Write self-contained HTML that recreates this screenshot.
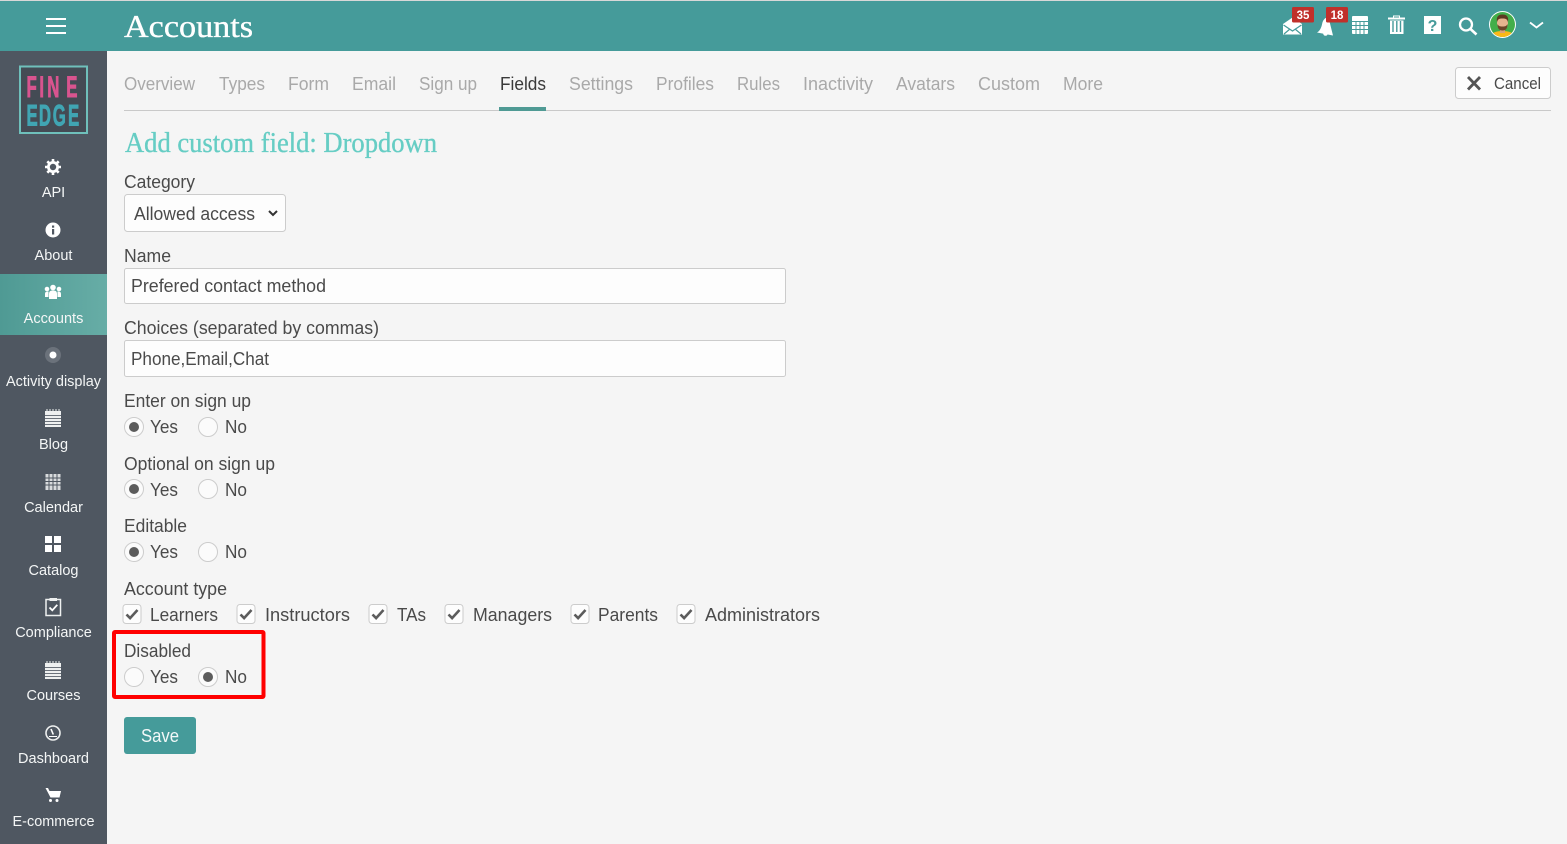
<!DOCTYPE html>
<html lang="en">
<head>
<meta charset="utf-8">
<title>Accounts</title>
<style>
html,body{margin:0;padding:0;background:#f5f5f5;width:1567px;height:844px;overflow:hidden}
svg{display:block;position:absolute;left:0;top:0}
text{font-family:"Liberation Sans",sans-serif;font-size:18px;fill:#4a4a4a}
.serif{font-family:"Liberation Serif",serif}
.tab{fill:#a9a9a9;font-size:18px}
.side text{fill:#f4f6f6;font-size:14.5px;text-anchor:middle}
.rad{fill:#fbfbfb;stroke:#ccc;stroke-width:1}
.box{fill:#fdfdfd;stroke:#ccc;stroke-width:1}
</style>
</head>
<body>
<svg width="1567" height="844" viewBox="0 0 1567 844" xmlns="http://www.w3.org/2000/svg">
<defs>
<linearGradient id="act" x1="0" x2="1" y1="0" y2="0"><stop offset="0" stop-color="#4f9a94"/><stop offset="1" stop-color="#67ada6"/></linearGradient>
<g id="rOff"><circle r="9.5" class="rad"/></g>
<g id="rOn"><circle r="9.5" class="rad"/><circle r="5" fill="#5c5c5c"/></g>
<g id="chk"><rect x="0.5" y="0.5" width="18" height="19" rx="3" class="box"/><path d="M4 10.500l3.600 3.600L15 6" fill="none" stroke="#5c5c5c" stroke-width="2.600"/></g>
</defs>

<rect width="1567" height="844" fill="#f5f5f5"/>
<rect width="1567" height="1" fill="#d8d8d8"/>
<rect y="1" width="1567" height="50" fill="#459b9a"/>
<rect y="51" width="107" height="793" fill="#4f5761"/>

<!-- header -->
<path d="M46 19h20M46 26h20M46 33h20" stroke="#fff" stroke-width="2"/>
<text class="serif" x="124" y="37" textLength="129" lengthAdjust="spacingAndGlyphs" style="font-size:32px;fill:#fff;stroke:#fff;stroke-width:.35px">Accounts</text>

<!-- mail -->
<path d="M1283 24l9.500-6.500 9.500 6.500v10.500h-19z" fill="#fff"/>
<path d="M1283.500 25l9 6 9-6M1284 34l6-5M1301 34l-6-5" fill="none" stroke="#459b9a" stroke-width="1.200"/>
<rect x="1292" y="7" width="22" height="15.500" rx="1.500" fill="#c0302a"/>
<text x="1303" y="19" text-anchor="middle" style="font-size:11.500px;font-weight:bold;fill:#fff">35</text>
<!-- bell -->
<path d="M1317 32.500c2.800-1.500 4.300-4.500 5.200-9 .7-3.500 3-6.500 6.300-6l4.500 18z" fill="#fff"/>
<circle cx="1325.500" cy="33.500" r="2.300" fill="#fff"/>
<rect x="1326" y="7" width="22" height="15.500" rx="1.500" fill="#c0302a"/>
<text x="1337" y="19" text-anchor="middle" style="font-size:11.500px;font-weight:bold;fill:#fff">18</text>
<!-- calendar -->
<rect x="1352" y="16" width="16" height="18" rx="1" fill="#fff"/>
<path d="M1352 21.500h16M1352 25.500h16M1352 29.500h16M1356 21v13M1360 21v13M1364 21v13" stroke="#459b9a" stroke-width="1"/>
<!-- trash -->
<path d="M1388 18.500h17" stroke="#fff" stroke-width="2"/><path d="M1393.500 18v-2h6v2" stroke="#fff" fill="none"/>
<path d="M1390 20.500h13.500v13.500h-13.500z" fill="#fff"/>
<path d="M1393 21v11M1396.800 21v11M1400.500 21v11" stroke="#459b9a" stroke-width="1.400"/>
<!-- help -->
<rect x="1424" y="16" width="17" height="18" fill="#fff"/>
<text x="1432.500" y="31" text-anchor="middle" style="font-size:16px;font-weight:bold;fill:#459b9a">?</text>
<!-- search -->
<circle cx="1466" cy="24.500" r="6" fill="none" stroke="#fff" stroke-width="2.300"/>
<path d="M1470.500 29l6 5.500" stroke="#fff" stroke-width="2.600"/>
<!-- avatar -->
<clipPath id="av"><circle cx="1502.500" cy="24.500" r="12.500"/></clipPath>
<circle cx="1502.500" cy="24.500" r="13.500" fill="#fff"/>
<circle cx="1502.500" cy="24.500" r="12.500" fill="#43ae4a"/>
<g clip-path="url(#av)">
<path d="M1491 38c0-5 4-7 11.500-7s11.500 2 11.500 7z" fill="#fbb817"/>
<rect x="1500" y="27" width="5" height="6" fill="#d9a27a"/>
<ellipse cx="1502.500" cy="23" rx="5.500" ry="6.500" fill="#e5b48e"/>
<path d="M1497 22c-1-6 2-7.500 5.500-7.500s6.500 1.500 5.500 7.500c-1-3-2-3.500-5.500-3.500s-4.500 .5-5.500 3.500z" fill="#5d3a22"/>
<path d="M1497.500 24c0 5 2 6.500 5 6.500s5-1.500 5-6.500c-1 2-2 2.500-5 2.500s-4-.5-5-2.500z" fill="#6b4528"/>
</g>
<path d="M1530 22.500l6.500 5 6.500-5" fill="none" stroke="#fff" stroke-width="1.800"/>

<!-- logo -->
<rect x="20" y="66.500" width="67" height="66.500" fill="#444b54" stroke="#6fc0bb" stroke-width="2"/>
<text x="0 23 37 71" y="97" transform="translate(26.500 0) scale(.56 1)" style="font-size:30px;font-weight:bold;fill:#d9548f;stroke:#d9548f;stroke-width:.9px">FINE</text>
<text x="0 22 47 74" y="125.500" transform="translate(26.500 0) scale(.56 1)" style="font-size:30px;font-weight:bold;fill:#40a5b3;stroke:#40a5b3;stroke-width:.9px">EDGE</text>

<!-- sidebar -->
<rect y="274" width="107" height="61" fill="url(#act)"/>
<g class="side">
<text x="53.500" y="197">API</text>
<text x="53.500" y="260">About</text>
<text x="53.500" y="323">Accounts</text>
<text x="53.500" y="386" textLength="95" lengthAdjust="spacingAndGlyphs">Activity display</text>
<text x="53.500" y="449">Blog</text>
<text x="53.500" y="512">Calendar</text>
<text x="53.500" y="575">Catalog</text>
<text x="53.500" y="637">Compliance</text>
<text x="53.500" y="700">Courses</text>
<text x="53.500" y="763">Dashboard</text>
<text x="53.500" y="826" textLength="82" lengthAdjust="spacingAndGlyphs">E-commerce</text>
</g>
<!-- side icons -->
<circle cx="53" cy="167" r="6" fill="#fff"/>
<path d="M53 159v16M45 167h16M47.300 161.300l11.400 11.400M58.700 161.300l-11.400 11.400" stroke="#fff" stroke-width="2.600"/>
<circle cx="53" cy="167" r="3.200" fill="#4f5761"/>
<circle cx="53" cy="230" r="7.500" fill="#fff"/>
<rect x="52" y="229" width="2.200" height="5.500" fill="#4f5761"/><rect x="52" y="225.500" width="2.200" height="2.200" fill="#4f5761"/>
<circle cx="53" cy="287.500" r="2.800" fill="#fff"/><circle cx="47" cy="289" r="2.300" fill="#fff"/><circle cx="59" cy="289" r="2.300" fill="#fff"/>
<path d="M49 299v-5c0-3 1.500-3.500 4-3.500s4 .5 4 3.500v5z" fill="#fff"/>
<path d="M45 297v-3c0-2 1-2.500 3.500-2.500v5.500zM61 297v-3c0-2-1-2.500-3.500-2.500v5.500z" fill="#fff"/>
<circle cx="53" cy="355" r="8" fill="#6b727b"/><circle cx="53" cy="355" r="3.500" fill="#fff"/>
<g id="note"><rect x="45" y="411" width="16" height="16" fill="#eef0f0"/><path d="M45 415.500h16M45 418.500h16M45 421.500h16M45 424.500h16" stroke="#6b727b" stroke-width="1"/><path d="M47 409v2M50 409v2M53 409v2M56 409v2M59 409v2" stroke="#eef0f0"/></g>
<use href="#note" y="252"/>
<rect x="45.500" y="474" width="15" height="16" fill="#d8dbdd"/><path d="M45 478h16M45 481.500h16M45 485h16M49 474v16M53 474v16M57 474v16" stroke="#4f5761"/>
<path d="M45 536h7v7h-7zM54 536h7v7h-7zM45 545h7v7h-7zM54 545h7v7h-7z" fill="#fff"/>
<rect x="46" y="599.500" width="14.500" height="16" fill="none" stroke="#eef0f0" stroke-width="1.500"/>
<rect x="49.500" y="598" width="7.500" height="3" fill="#eef0f0"/>
<path d="M49.500 607.500l2.800 2.800 5-5.500" fill="none" stroke="#fff" stroke-width="1.800"/>
<circle cx="53" cy="733" r="7" fill="none" stroke="#eef0f0" stroke-width="1.600"/><path d="M51 729l2.300 5.500" stroke="#fff" stroke-width="1.600"/><path d="M49 736.500h8" stroke="#fff" stroke-width="1"/>
<path d="M45.500 788h2.500l1.500 3h11.500l-1.500 6.500h-9z" fill="#fff"/>
<circle cx="50.500" cy="800.500" r="1.500" fill="#fff"/><circle cx="57" cy="800.500" r="1.500" fill="#fff"/>

<!-- tabs -->
<path d="M124 110.500h1427" stroke="#c9c9c9" stroke-width="1"/>
<rect x="499" y="107" width="47" height="4" fill="#4f9a94"/>
<text class="tab" x="124" y="90" textLength="71" lengthAdjust="spacingAndGlyphs">Overview</text>
<text class="tab" x="219" y="90" textLength="46" lengthAdjust="spacingAndGlyphs">Types</text>
<text class="tab" x="288" y="90" textLength="41" lengthAdjust="spacingAndGlyphs">Form</text>
<text class="tab" x="352" y="90" textLength="44" lengthAdjust="spacingAndGlyphs">Email</text>
<text class="tab" x="419" y="90" textLength="58" lengthAdjust="spacingAndGlyphs">Sign up</text>
<text x="500" y="90" textLength="46" lengthAdjust="spacingAndGlyphs" style="fill:#3a3a3a">Fields</text>
<text class="tab" x="569" y="90" textLength="64" lengthAdjust="spacingAndGlyphs">Settings</text>
<text class="tab" x="656" y="90" textLength="58" lengthAdjust="spacingAndGlyphs">Profiles</text>
<text class="tab" x="737" y="90" textLength="43" lengthAdjust="spacingAndGlyphs">Rules</text>
<text class="tab" x="803" y="90" textLength="70" lengthAdjust="spacingAndGlyphs">Inactivity</text>
<text class="tab" x="896" y="90" textLength="59" lengthAdjust="spacingAndGlyphs">Avatars</text>
<text class="tab" x="978" y="90" textLength="62" lengthAdjust="spacingAndGlyphs">Custom</text>
<text class="tab" x="1063" y="90" textLength="40" lengthAdjust="spacingAndGlyphs">More</text>

<!-- cancel -->
<rect x="1455.500" y="67.500" width="95" height="31" rx="3" class="box"/>
<path d="M1468 77l12 12.500M1480 77l-12 12.500" stroke="#555" stroke-width="2.800"/>
<text x="1494" y="89" textLength="47" lengthAdjust="spacingAndGlyphs" style="font-size:17px">Cancel</text>

<!-- heading -->
<text class="serif" x="125" y="152" textLength="312" lengthAdjust="spacingAndGlyphs" style="font-size:28px;fill:#66cdc4;stroke:#66cdc4;stroke-width:.35px">Add custom field: Dropdown</text>

<!-- form -->
<text x="124" y="188" textLength="71" lengthAdjust="spacingAndGlyphs">Category</text>
<rect x="124.500" y="194.500" width="161" height="37" rx="3" class="box"/>
<text x="134" y="220" textLength="121" lengthAdjust="spacingAndGlyphs">Allowed access</text>
<path d="M269 211l4 4 4-4" fill="none" stroke="#333" stroke-width="2"/>

<text x="124" y="262" textLength="47" lengthAdjust="spacingAndGlyphs">Name</text>
<rect x="124.500" y="268.500" width="661" height="35" rx="2" class="box"/>
<text x="131" y="292" textLength="195" lengthAdjust="spacingAndGlyphs">Prefered contact method</text>

<text x="124" y="334" textLength="255" lengthAdjust="spacingAndGlyphs">Choices (separated by commas)</text>
<rect x="124.500" y="340.500" width="661" height="36" rx="2" class="box"/>
<text x="131" y="365" textLength="138" lengthAdjust="spacingAndGlyphs">Phone,Email,Chat</text>

<text x="124" y="407" textLength="127" lengthAdjust="spacingAndGlyphs">Enter on sign up</text>
<use href="#rOn" x="134" y="427"/><text x="150" y="433" textLength="28" lengthAdjust="spacingAndGlyphs">Yes</text>
<use href="#rOff" x="208" y="427"/><text x="225" y="433" textLength="22" lengthAdjust="spacingAndGlyphs">No</text>

<text x="124" y="470" textLength="151" lengthAdjust="spacingAndGlyphs">Optional on sign up</text>
<use href="#rOn" x="134" y="489"/><text x="150" y="496" textLength="28" lengthAdjust="spacingAndGlyphs">Yes</text>
<use href="#rOff" x="208" y="489"/><text x="225" y="496" textLength="22" lengthAdjust="spacingAndGlyphs">No</text>

<text x="124" y="532" textLength="63" lengthAdjust="spacingAndGlyphs">Editable</text>
<use href="#rOn" x="134" y="552"/><text x="150" y="558" textLength="28" lengthAdjust="spacingAndGlyphs">Yes</text>
<use href="#rOff" x="208" y="552"/><text x="225" y="558" textLength="22" lengthAdjust="spacingAndGlyphs">No</text>

<text x="124" y="595" textLength="103" lengthAdjust="spacingAndGlyphs">Account type</text>
<use href="#chk" x="122.500" y="604"/><text x="150" y="621" textLength="68" lengthAdjust="spacingAndGlyphs">Learners</text>
<use href="#chk" x="236.500" y="604"/><text x="265" y="621" textLength="85" lengthAdjust="spacingAndGlyphs">Instructors</text>
<use href="#chk" x="368.500" y="604"/><text x="397" y="621" textLength="29" lengthAdjust="spacingAndGlyphs">TAs</text>
<use href="#chk" x="444.500" y="604"/><text x="473" y="621" textLength="79" lengthAdjust="spacingAndGlyphs">Managers</text>
<use href="#chk" x="570.500" y="604"/><text x="598" y="621" textLength="60" lengthAdjust="spacingAndGlyphs">Parents</text>
<use href="#chk" x="676.500" y="604"/><text x="705" y="621" textLength="115" lengthAdjust="spacingAndGlyphs">Administrators</text>

<rect x="114" y="632" width="149.500" height="65" rx="1" fill="none" stroke="#f00" stroke-width="4"/>
<text x="124" y="657" textLength="67" lengthAdjust="spacingAndGlyphs">Disabled</text>
<use href="#rOff" x="134" y="677"/><text x="150" y="683" textLength="28" lengthAdjust="spacingAndGlyphs">Yes</text>
<use href="#rOn" x="208" y="677"/><text x="225" y="683" textLength="22" lengthAdjust="spacingAndGlyphs">No</text>

<rect x="124" y="717" width="72" height="37" rx="3" fill="#459b9a"/>
<text x="141" y="742" textLength="38" lengthAdjust="spacingAndGlyphs" style="fill:#f2f8f8">Save</text>
</svg>
</body>
</html>
